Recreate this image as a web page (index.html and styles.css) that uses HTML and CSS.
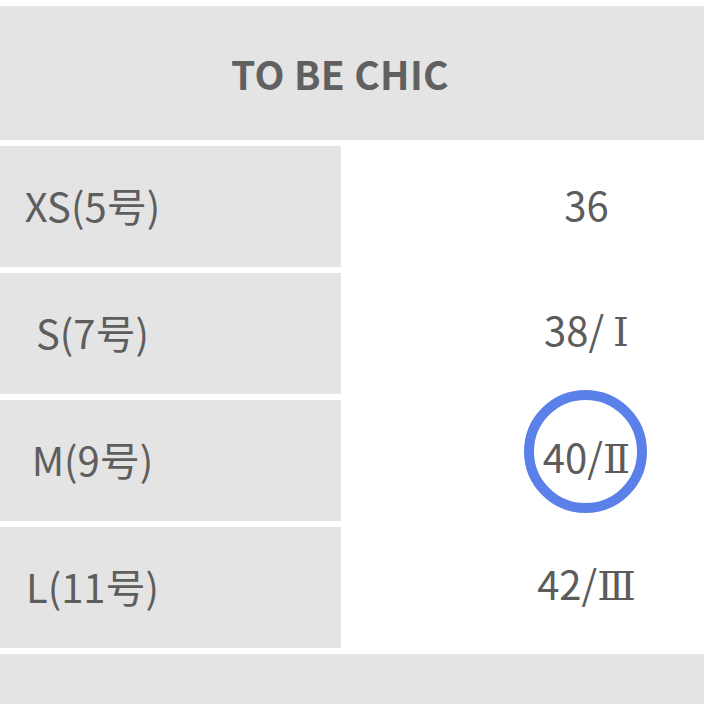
FILE: index.html
```html
<!DOCTYPE html>
<html lang="zh">
<head>
<meta charset="utf-8">
<link rel="stylesheet" href="styles.css">
</head>
<body>
<div class="page">
  <div class="header"><span class="title">TO BE CHIC</span></div>
  <div class="table">
    <div class="label"><span class="label-text">XS(5号)</span></div>
    <div class="value"><span class="value-text">36</span></div>
    <div class="label"><span class="label-text">S(7号)</span></div>
    <div class="value"><span class="value-text">38/ <span class="roman">Ⅰ</span></span></div>
    <div class="label"><span class="label-text">M(9号)</span></div>
    <div class="value marked"><span class="value-text">40/<span class="roman">Ⅱ</span></span><span class="ring"></span></div>
    <div class="label"><span class="label-text">L(11号)</span></div>
    <div class="value"><span class="value-text">42/<span class="roman">Ⅲ</span></span></div>
  </div>
  <div class="footer"></div>
</div>
</body>
</html>
```

FILE: styles.css
```css
html, body {
  margin: 0;
  padding: 0;
  background: #ffffff;
}

body {
  font-family: "Noto Sans CJK SC", "Noto Sans", sans-serif;
  color: #5c5c5c;
}

.page {
  width: 704px;
  height: 704px;
  overflow: hidden;
  padding-top: 6px;
  box-sizing: border-box;
  display: flex;
  flex-direction: column;
}

.header {
  height: 134px;
  background: #e4e4e4;
  display: flex;
  align-items: center;
  justify-content: center;
  padding-right: 24px;
  box-sizing: border-box;
}

.title {
  font-weight: 700;
  font-size: 39px;
  letter-spacing: 0.3px;
  color: #606060;
  line-height: 1;
}

.table {
  margin-top: 6px;
  display: grid;
  grid-template-columns: 341px 1fr;
  grid-auto-rows: 121px;
  row-gap: 6px;
}

.label {
  background: #e4e4e4;
  display: flex;
  align-items: center;
  padding-bottom: 4px;
  box-sizing: border-box;
}

.label-text {
  width: 185px;
  text-align: center;
  font-size: 40px;
  line-height: 1;
  color: #5e5e5e;
}

.value {
  display: flex;
  align-items: center;
  justify-content: center;
  padding-left: 128px;
  padding-bottom: 6px;
  box-sizing: border-box;
  position: relative;
}

.value-text {
  font-size: 40px;
  line-height: 1;
  color: #5c5c5c;
  white-space: pre;
}

.roman {
  font-family: "DejaVu Serif", "Liberation Serif", serif;
  font-size: 40px;
}

.ring {
  position: absolute;
  left: 183px;
  top: -10px;
  width: 123px;
  height: 123px;
  box-sizing: border-box;
  border: 10px solid #5b80ea;
  border-radius: 50%;
}

.footer {
  margin-top: 6px;
  flex: 1;
  background: #e4e4e4;
}
```
